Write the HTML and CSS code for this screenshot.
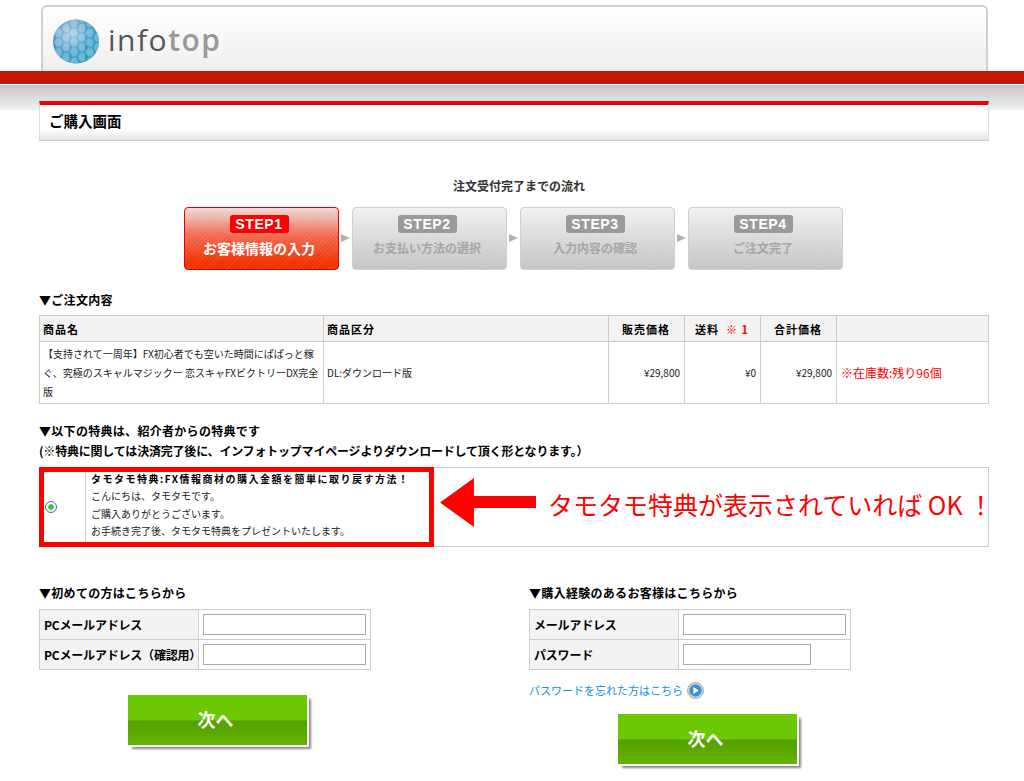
FILE: index.html
```html
<!DOCTYPE html>
<html lang="ja">
<head>
<meta charset="utf-8">
<title>ご購入画面</title>
<link rel="stylesheet" href="styles.css">
</head>
<body>
<header class="site-head">
  <div class="logo-box">
    <svg class="globe" width="48" height="45" viewBox="0 0 48 46">
      <defs>
        <linearGradient id="gb" x1="0" y1="0" x2="1" y2="1"><stop offset="0" stop-color="#4f6fb5"/><stop offset=".5" stop-color="#3a93c2"/><stop offset="1" stop-color="#1593b2"/></linearGradient>
        <radialGradient id="gh" cx=".38" cy=".32" r=".45"><stop offset="0" stop-color="#fff" stop-opacity=".5"/><stop offset="1" stop-color="#fff" stop-opacity="0"/></radialGradient>
        <pattern id="hx" width="16.2" height="10" patternUnits="userSpaceOnUse" x="1" y="-1">
          <g fill="#8cc8e0" fill-opacity=".7">
            <polygon points="2.7,.6 7.1,.6 9.4,5 7.1,9.4 2.7,9.4 .4,5"/>
            <polygon points="10.8,-4.4 15.2,-4.4 17.5,0 15.2,4.4 10.8,4.4 8.5,0"/>
            <polygon points="10.8,5.6 15.2,5.6 17.5,10 15.2,14.4 10.8,14.4 8.5,10"/>
          </g>
        </pattern>
        <clipPath id="gc"><ellipse cx="24" cy="23" rx="23.5" ry="22.5"/></clipPath>
      </defs>
      <ellipse cx="24" cy="23" rx="23.5" ry="22.5" fill="url(#gb)"/>
      <g clip-path="url(#gc)">
        <rect width="48" height="46" fill="url(#hx)"/>
        <rect width="48" height="46" fill="url(#gh)"/>
      </g>
    </svg>
    <span class="logo-text">info<span class="logo-light">top</span></span>
  </div>
</header>
<div class="red-band"></div>
<div class="gray-band"></div>

<main class="wrap">
  <h1 class="page-title">ご購入画面</h1>

  <p class="flow-title">注文受付完了までの流れ</p>
  <ol class="steps">
    <li class="step step-on"><span class="step-tag">STEP1</span><span class="step-name">お客様情報の入力</span></li>
    <li class="step-arrow"></li>
    <li class="step"><span class="step-tag">STEP2</span><span class="step-name">お支払い方法の選択</span></li>
    <li class="step-arrow"></li>
    <li class="step"><span class="step-tag">STEP3</span><span class="step-name">入力内容の確認</span></li>
    <li class="step-arrow"></li>
    <li class="step"><span class="step-tag">STEP4</span><span class="step-name">ご注文完了</span></li>
  </ol>

  <h2 class="sec-title order-title">▼ご注文内容</h2>
  <table class="order">
    <colgroup><col class="c-name"><col class="c-kind"><col class="c-num"><col class="c-num"><col class="c-num"><col></colgroup>
    <tr class="order-head">
      <th class="left">商品名</th><th class="left">商品区分</th><th>販売価格</th><th>送料 <span class="red">&nbsp;※ 1</span></th><th>合計価格</th><th></th>
    </tr>
    <tr class="order-row">
      <td class="item">【支持されて一周年】FX初心者でも空いた時間にぱぱっと稼ぐ、究極のスキャルマジックー 恋スキャFXビクトリーDX完全版</td>
      <td>DL:ダウンロード版</td>
      <td class="num">¥29,800</td><td class="num">¥0</td><td class="num">¥29,800</td>
      <td class="stock">※在庫数:残り96個</td>
    </tr>
  </table>

  <h2 class="sec-title bonus-title">▼以下の特典は、紹介者からの特典です<br><span class="tight">(※特典に関しては決済完了後に、インフォトップマイページよりダウンロードして頂く形となります。）</span></h2>
  <div class="bonus">
    <div class="bonus-frame">
      <div class="bonus-radio"><span class="radio"></span></div>
      <div class="bonus-text">
        <strong>タモタモ特典:FX情報商材の購入金額を簡単に取り戻す方法！</strong>
        <span>こんにちは、タモタモです。</span>
        <span>ご購入ありがとうございます。</span>
        <span>お手続き完了後、タモタモ特典をプレゼントいたします。</span>
      </div>
    </div>
    <svg class="big-arrow" width="96" height="49" viewBox="0 0 96 49"><polygon fill="#f00" points="0,24.5 34,0 34,18 96,18 96,30 34,30 34,49"/></svg>
    <span class="bonus-note">タモタモ特典が表示されていれば OK ！</span>
  </div>

  <div class="forms">
    <section class="form-col">
      <h2 class="sec-title">▼初めての方はこちらから</h2>
      <table class="entry entry-new">
        <tr><th>PCメールアドレス</th><td><input class="field" type="text"></td></tr>
        <tr><th>PCメールアドレス（確認用）</th><td><input class="field" type="text"></td></tr>
      </table>
      <div class="next-row next-new"><a class="next">次へ</a></div>
    </section>
    <section class="form-col">
      <h2 class="sec-title">▼購入経験のあるお客様はこちらから</h2>
      <table class="entry entry-old">
        <tr><th>メールアドレス</th><td><input class="field" type="text"></td></tr>
        <tr><th>パスワード</th><td><input class="field field-short" type="password"></td></tr>
      </table>
      <p class="forgot"><a>パスワードを忘れた方はこちら</a>
        <svg width="17" height="17" viewBox="0 0 16 16"><circle cx="8" cy="8" r="7.5" fill="#d8d8d8" stroke="#999" stroke-width=".8"/><circle cx="8" cy="8" r="5.8" fill="#3d8fdc"/><polygon points="6,4.8 11,8 6,11.2" fill="#fff"/></svg>
      </p>
      <div class="next-row next-old"><a class="next">次へ</a></div>
    </section>
  </div>
</main>
</body>
</html>
```

FILE: styles.css
```css
* { box-sizing: border-box; }
html, body { margin: 0; padding: 0; }
body {
  background: #fff;
  color: #000;
  font-family: "Noto Sans CJK JP", "Liberation Sans", sans-serif;
  font-size: 11px;
  height: 781px;
  overflow: hidden;
}

/* header */
.site-head { height: 71px; padding: 5px 36px 0 41px; }
.logo-box {
  height: 66px;
  border: 2px solid #d0d0d0;
  border-bottom: 0;
  border-radius: 6px 6px 0 0;
  background: linear-gradient(#fff, #efefef);
  display: flex;
  align-items: center;
  padding: 4px 0 0 9px;
  gap: 8px;
}
.logo-text {
  font-family: "Open Sans", sans-serif;
  font-size: 30px;
  letter-spacing: 1.5px;
  color: #555;
  line-height: 1;
  margin-top: -3px;
}
.logo-light { color: #999; font-weight: 600; }
.red-band { height: 13px; background: #c11704; }
.gray-band { height: 25px; margin-top: 1px; background: linear-gradient(#c6c6c6, #f2f2f2); }

.wrap { width: 950px; margin: -9px 0 0 39px; position: relative; }

.page-title {
  margin: 0;
  height: 40px;
  border-top: 4px solid #f00000;
  border-left: 1px solid #ddd;
  border-right: 1px solid #ddd;
  border-bottom: 1px solid #ccc;
  background: linear-gradient(#fff 70%, #e4e4e4);
  font-size: 14.5px;
  font-weight: 700;
  line-height: 32px;
  padding-left: 9px;
}

.flow-title {
  margin: 36px 0 0;
  padding-left: 10px;
  text-align: center;
  font-size: 12px;
  font-weight: 700;
  color: #333;
  line-height: 18px;
}
.steps {
  list-style: none;
  margin: 12px 0 0 145px;
  padding: 0;
  display: flex;
  align-items: center;
}
.step {
  width: 155px;
  height: 63px;
  border: 1px solid #dfc9c9;
  border-radius: 4px;
  background:
    repeating-linear-gradient(135deg, rgba(255,255,255,.09) 0 1px, rgba(255,255,255,0) 1px 3px),
    linear-gradient(#f0f0f0, #c4c4c4);
  display: flex;
  flex-direction: column;
  align-items: center;
  padding: 7px 5px 0 0;
}
.step-on {
  border-color: #e80000;
  background:
    repeating-linear-gradient(135deg, rgba(255,255,255,.08) 0 1px, rgba(255,255,255,0) 1px 3px),
    linear-gradient(#ecdcd8, #f26a50 45%, #f23000 90%);
}
.step-tag {
  width: 59px;
  height: 18px;
  border-radius: 3px;
  background: #9a9a9a;
  color: #fff;
  font-family: "Liberation Sans", sans-serif;
  font-size: 14px;
  font-weight: 700;
  letter-spacing: .6px;
  line-height: 18px;
  text-align: center;
}
.step-on .step-tag { background: #f00; }
.step-name {
  margin-top: 5px;
  font-size: 12px;
  font-weight: 700;
  line-height: 20px;
  color: #a6a6a6;
}
.step-on .step-name { color: #fff; font-size: 14px; }
.step-arrow {
  width: 13px;
  height: 9px;
  flex: none;
}
.step-arrow::before {
  content: "";
  display: block;
  margin-left: 2px;
  width: 0;
  height: 0;
  border-left: 9px solid #b0b0b0;
  border-top: 4.5px solid transparent;
  border-bottom: 4.5px solid transparent;
}

.sec-title { margin: 0; font-size: 12px; font-weight: 700; line-height: 20px; letter-spacing: .3px; }
.tight { letter-spacing: -.2px; }
.order-title { margin-top: 20px; }
table { border-collapse: collapse; }
.order { width: 950px; margin-top: 5px; table-layout: fixed; }
.c-name { width: 284px; }
.c-kind { width: 285px; }
.c-num { width: 76px; }
.order th, .order td { border: 1px solid #ccc; padding: 0 4px 0 3px; }
.order-head { height: 26px; background: #f3f3f3; }
.order-head th { font-size: 11px; font-weight: 700; letter-spacing: 1px; text-align: center; }
.order-head th.left { text-align: left; }
.red { color: #f00; }
.order-row { height: 62px; }
.order-row td { line-height: 19px; font-size: 10px; color: #222; }
.order-row td.item { padding: 0 1px 0 3px; }
.order-row td.num { text-align: right; }
.order-row td.stock { color: #f00; font-size: 12px; padding-left: 4px; }

.bonus-title { margin-top: 17px; }
.bonus {
  margin-top: 6px;
  height: 80px;
  border: 1px solid #ccc;
  border-left: 0;
  display: flex;
  align-items: center;
}
.bonus-frame {
  width: 395px;
  height: 80px;
  flex: none;
  border: 5px solid #f00;
  display: flex;
}
.bonus-radio {
  width: 42px;
  border-right: 1px solid #ccc;
  display: flex;
  align-items: center;
  padding-left: 1px;
}
.radio {
  width: 12px;
  height: 12px;
  border-radius: 50%;
  border: 1px solid #4a7196;
  background: radial-gradient(circle, #3fbf4a 0 2.5px, #f4f4f4 3px);
}
.bonus-text {
  padding-left: 5px;
  display: flex;
  flex-direction: column;
  font-size: 10px;
  line-height: 17.3px;
  margin-top: -2px;
  white-space: nowrap;
  color: #222;
}
.bonus-text strong { font-size: 10px; letter-spacing: 1.5px; color: #000; }
.big-arrow { margin: -9px 0 0 6px; flex: none; }
.bonus-note {
  margin: -6px 0 0 12px;
  color: #f00;
  font-size: 25px;
  line-height: 30px;
  white-space: nowrap;
}

.forms { display: grid; grid-template-columns: 490px 460px; margin-top: 36px; }
.entry { margin-top: 6px; table-layout: fixed; }
.entry th, .entry td { border: 1px solid #ccc; height: 30px; padding: 0 4px; }
.entry th { background: #f3f3f3; text-align: left; font-size: 12px; font-weight: 700; white-space: nowrap; letter-spacing: -.2px; }
.entry-new { width: 332px; }
.entry-new th { width: 159px; }
.entry-old { width: 322px; }
.entry-old th { width: 149px; }
.field {
  display: block;
  width: 163px;
  height: 21px;
  margin: 0;
  border: 1px solid #aaa;
  background: #fff;
  padding: 0;
}
.field-short { width: 128px; }
.forgot {
  margin: 11px 0 0;
  height: 18px;
  display: flex;
  align-items: center;
  gap: 4px;
  color: #0f8fe8;
  font-size: 11px;
}
.next-row { padding-left: 89px; }
.next-new { margin-top: 25px; }
.next-old { margin-top: 15px; }
.next {
  display: block;
  width: 179px;
  height: 50px;
  background: linear-gradient(#6cc800 0 50%, #559f00 52%, #63b400 100%);
  color: #fff;
  font-size: 18px;
  font-weight: 700;
  line-height: 48px;
  padding-right: 4px;
  text-align: center;
  box-shadow: 2px 2px 0 #fff, 4px 4px 2px #888;
}
```
